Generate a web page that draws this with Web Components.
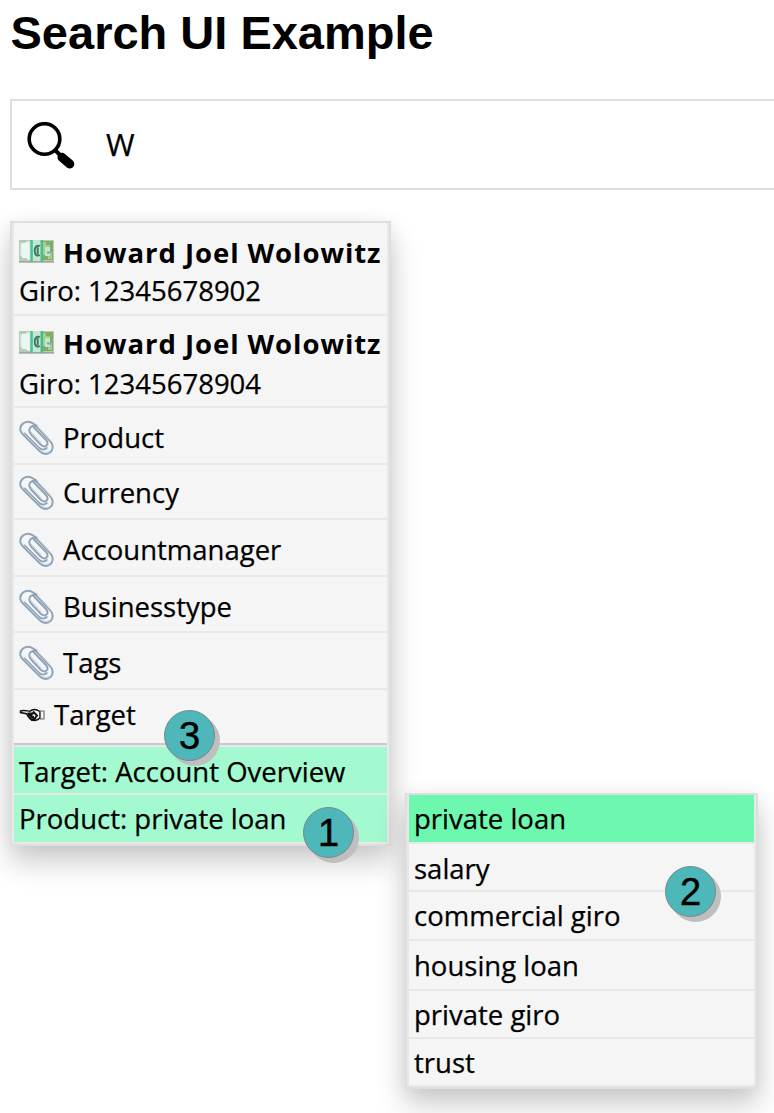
<!DOCTYPE html>
<html lang="en">
<head>
<meta charset="utf-8">
<title>Search UI Example</title>
<style>
  html, body { margin: 0; background: #fff; overflow: hidden; }
  body { height: 1113px; font-family: "Open Sans", "Noto Sans", sans-serif; color: #000; }
</style>
</head>
<body>
<search-page></search-page>
<script>
const define = (name, html, setup) => {
  const template = document.createElement('template');
  template.innerHTML = html;
  customElements.define(name, class extends HTMLElement {
    constructor() {
      super();
      this.attachShadow({ mode: 'open' }).append(template.content.cloneNode(true));
    }
    connectedCallback() { if (setup) setup(this, this.shadowRoot); }
  });
};

const icons = {
  search: `<svg width="50" height="48" viewBox="0 0 50 48">
    <circle cx="17.500" cy="17" r="15.300" fill="none" stroke="#000" stroke-width="3.6"/>
    <path d="M28 28 35 35" stroke="#000" stroke-width="4"/>
    <path d="M35 35.300 42.800 42" stroke="#000" stroke-width="9" stroke-linecap="round"/></svg>`,
  cash: `<svg width="35" height="23" viewBox="0 0 35 23">
    <rect width="35" height="22.5" fill="#b9c9bd"/>
    <rect x="1.3" y="1" width="32.5" height="19" fill="#d8ebdc"/>
    <rect x="2.5" y="3" width="8" height="16" fill="#eaf7f4"/>
    <path d="M2 3.5V1.7H7M2 16v3h6" fill="none" stroke="#a7c99e" stroke-width="1.4"/>
    <rect x="22" y="1" width="12" height="19" fill="#7ead68"/>
    <path d="M24 2h3v3h4v4h-3v3h5v7h-4v-4h-5z" fill="#a4cd86"/>
    <rect x="26" y="7" width="5" height="9" fill="#c5e5cc"/>
    <rect x="28" y="11.5" width="4" height="2" fill="#69a8db"/>
    <rect x="12" width="11.5" height="22.5" fill="#c2e8d0"/>
    <rect x="11.3" width="2.5" height="22.5" fill="#4bc19a"/>
    <rect x="21.5" width="2.5" height="22.5" fill="#4bb98c"/>
    <path d="M20.8 6.2C17.8 4.7 15.7 7 15.7 10.8S18 16.7 20.8 15M18.7 7.3v7" fill="none" stroke="#3d7764" stroke-width="1.9"/>
    <path d="M0 21.8h35" stroke="#9aa89d" stroke-width="1.5"/></svg>`,
  clip: `<svg width="36" height="36" viewBox="0 0 36 36" fill="none" stroke-linecap="round">
    <g stroke="#8fa3b6" stroke-width="1.900">
    <path d="M17.5 5.5 12.5 2.6C7 -.2 .2 4.7 1.4 10.5 1.7 12 3 13.5 4.5 15L20.5 31C23.5 34 27.500 35 31 32.500S34.500 25 31.500 21.500L18.500 7.500C15.500 4.500 11.500 6 10.500 9S11.500 14 13.500 16L21.500 24.500C24 27 26.500 26.800 27.700 25.400S28.500 21.500 26.500 19.500L14.500 7"/>
    <path d="M5.500 13.500 19 27C21.500 29.500 25 30.500 27.700 28"/></g>
    <g stroke="#c3d4e3" stroke-width="1"><path d="M2.500 10C3 12 5 14 7 16L20.500 29.500C24 33 28 33.500 31 31M19.500 7.500 32 21M12 12 22.500 23"/></g></svg>`,
  hand: `<svg width="27" height="16" viewBox="0 0 27 16">
    <path d="M1.500 4C5 2.500 8 4 11 4.300 14 1.300 18 2.500 21 4.500V11C18 14 13 14.500 10 10.500L7.500 6.800 1.500 5.600z" fill="#f5f5f5" stroke="#111" stroke-width="1.500"/>
    <path d="M8.500 6.500h6M8.500 8.500l5-.5M10 10.700l5-1M12 13l5-2M14 4.500l4 4-3 4" fill="none" stroke="#111" stroke-width="2"/>
    <path d="M21.500 4h3.500v8h-3.500z" fill="#f5f5f5" stroke="#666" stroke-width="1.100"/></svg>`
};

define('app-icon', `<style>:host{display:block;flex:none} svg{display:block}</style><span></span>`,
  (el, root) => { root.querySelector('span').innerHTML = icons[el.getAttribute('name')]; });

define('search-field', `<style>
  :host{display:flex;align-items:flex-start;box-sizing:border-box;height:91px;border:2px solid #dfdfdf;border-right:0;background:#fff}
  app-icon{margin:21px 0 0 15px}
  p{margin:22px 0 0 29px;font-size:31px;line-height:42px;-webkit-text-stroke:.25px #000}
</style><app-icon name="search"></app-icon><p><slot></slot></p>`);

define('menu-item', `<style>
  :host{display:block;box-sizing:border-box;height:var(--h);padding-top:var(--t);border-bottom:2px solid #e8e8e8;
    font-size:27.5px;line-height:38px;white-space:nowrap;padding-left:5px;-webkit-text-stroke:.25px #000}
  :host([tone="soft"]){background:#a3fad0}
  :host([tone="strong"]){background:#6ef7ae}
  :host([divider]){border-bottom:2px solid #c9c9c9}
  :host([lead]){border-top:2px solid #e8e8e8}
  .line{display:flex;align-items:flex-start;gap:9px}
  app-icon{margin-top:var(--i)}
  ::slotted(b){letter-spacing:.95px;-webkit-text-stroke:0}
  ::slotted([slot="detail"]){display:block;margin-top:var(--d)}
</style><div class="line"><span><slot></slot></span></div><slot name="detail"></slot>`,
  (el, root) => {
    el.style.setProperty('--h', el.getAttribute('h') + 'px');
    el.style.setProperty('--t', el.getAttribute('t') + 'px');
    const name = el.getAttribute('icon');
    if (name) {
      const icon = document.createElement('app-icon');
      icon.setAttribute('name', name);
      el.style.setProperty('--i', { cash: '6px', clip: '1px', hand: '11px' }[name]);
      const line = root.querySelector('.line');
      if (name !== 'cash') line.style.gap = '8px';
      line.prepend(icon);
    }
  });

define('drop-menu', `<style>
  :host{display:block;box-sizing:border-box;border:2px solid #dedede;background:#f5f5f5;
    box-shadow:0 16px 28px rgba(0,0,0,.2),0 2px 18px rgba(0,0,0,.06)}
  div{border:solid #e8e8e8;border-width:0 2px}
</style><div><slot></slot></div>`);

define('call-out', `<style>
  :host{position:absolute;display:block;box-sizing:border-box;width:51px;height:51px;border:1px solid #7d8588;border-radius:50%;
    background:#4db7b9;box-shadow:5px 5px 0 #bfbfbf;font:38px/51px "Liberation Sans",Arial,sans-serif;text-align:center;-webkit-text-stroke:.5px #000}
</style><slot></slot>`);

define('search-page', `<style>
  :host{display:block;position:relative;height:1113px;overflow:hidden;padding-left:10px}
  h1{margin:0;padding-top:6px;height:93px;font:bold 47px/54px "Liberation Sans",Arial,sans-serif;white-space:nowrap;text-indent:.5px}
  .menus{display:flex;align-items:flex-start;gap:14px;margin-top:31px}
  .main{width:381px}
  .sub{width:353px;margin-top:572px}
  .detail1{--d:0px}.detail2{--d:2px}
</style>
<h1>Search UI Example</h1>
<search-field>W</search-field>
<div class="menus">
  <drop-menu class="main">
    <menu-item class="detail1" h="93" t="11" icon="cash"><b>Howard Joel Wolowitz</b><span slot="detail">Giro: 12345678902</span></menu-item>
    <menu-item class="detail2" h="92" t="9" icon="cash"><b>Howard Joel Wolowitz</b><span slot="detail">Giro: 12345678904</span></menu-item>
    <menu-item h="57" t="11" icon="clip">Product</menu-item>
    <menu-item h="55" t="9" icon="clip">Currency</menu-item>
    <menu-item h="57" t="11" icon="clip">Accountmanager</menu-item>
    <menu-item h="56" t="11" icon="clip">Businesstype</menu-item>
    <menu-item h="57" t="11" icon="clip">Tags</menu-item>
    <menu-item h="55" t="6" icon="hand" divider>Target</menu-item>
    <menu-item h="50" t="6" tone="soft" lead>Target: Account Overview</menu-item>
    <menu-item h="49" t="5" tone="soft">Product: private loan</menu-item>
  </drop-menu>
  <drop-menu class="sub">
    <menu-item h="49" t="5" tone="strong">private loan</menu-item>
    <menu-item h="48" t="6">salary</menu-item>
    <menu-item h="49" t="5">commercial giro</menu-item>
    <menu-item h="50" t="6">housing loan</menu-item>
    <menu-item h="48" t="5">private giro</menu-item>
    <menu-item h="48" t="5">trust</menu-item>
  </drop-menu>
</div>
<call-out style="left:303px;top:807px">1</call-out>
<call-out style="left:665px;top:866px">2</call-out>
<call-out style="left:164px;top:710px">3</call-out>`);
</script>
</body>
</html>
